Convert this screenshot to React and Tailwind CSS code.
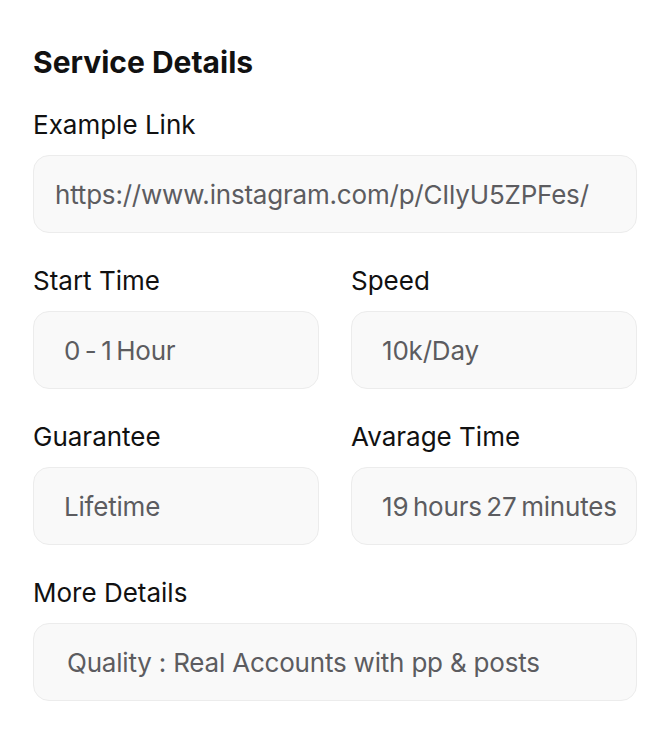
import React from 'react';

const Field = ({ label, value, pad = 'pl-[30px]', tight = false }) => (
  <div className="flex flex-col">
    <div className="h-[30px] mb-[15px] flex items-center text-[26px] leading-none text-[#111111]">
      {label}
    </div>
    <div className={`h-[78px] flex items-center rounded-[16px] border border-[#ececec] bg-[#f9f9f9] ${pad} text-[26px] tracking-[-0.2px] text-[#5c5c60] whitespace-nowrap overflow-hidden ${tight ? '[word-spacing:-2.5px]' : ''}`}>
      {value}
    </div>
  </div>
);

const App = () => {
  return (
    <div className="w-[670px] h-[734px] bg-white px-[33px] pt-[44px]" style={{ fontFamily: 'Inter, "Liberation Sans", sans-serif' }}>
      <h2 className="h-[36px] flex items-center text-[30px] font-bold text-[#111111]">
        Service Details
      </h2>
      <div className="mt-[30px] flex flex-col gap-[33px]">
        <Field label="Example Link" value="https://www.instagram.com/p/CIlyU5ZPFes/" pad="pl-[21px]" />
        <div className="grid grid-cols-2 gap-[32px]">
          <Field label="Start Time" value="0 - 1 Hour" tight />
          <Field label="Speed" value="10k/Day" tight />
        </div>
        <div className="grid grid-cols-2 gap-[32px]">
          <Field label="Guarantee" value="Lifetime" tight />
          <Field label="Avarage Time" value="19 hours 27 minutes" tight />
        </div>
        <Field label="More Details" value="Quality : Real Accounts with pp & posts" pad="pl-[33px]" />
      </div>
    </div>
  );
};

export default App;
